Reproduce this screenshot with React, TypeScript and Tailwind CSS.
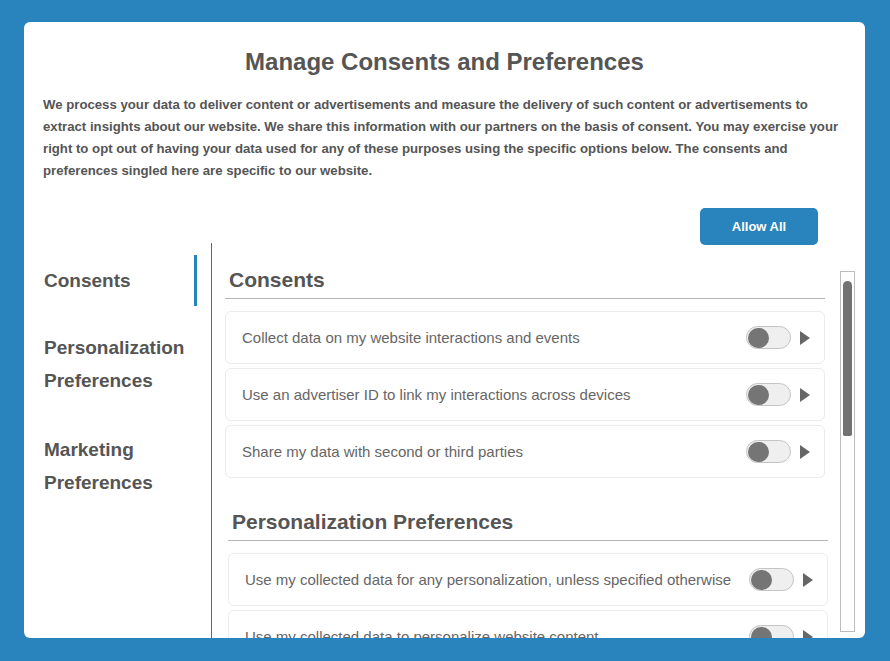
const consents = [
  'Collect data on my website interactions and events',
  'Use an advertiser ID to link my interactions across devices',
  'Share my data with second or third parties',
];

const personalization = [
  'Use my collected data for any personalization, unless specified otherwise',
  'Use my collected data to personalize website content',
];

function Toggle() {
  return (
    <div className="flex h-[23px] w-[45px] items-center rounded-full border border-[#c4c4c4] bg-[#efefef] pl-[1px]">
      <div className="h-[20px] w-[21px] rounded-full bg-[#757575]" />
    </div>
  );
}

function Row({ label }: { label: string }) {
  return (
    <div className="flex h-[53px] items-center justify-between rounded-[6px] border border-[#ebebeb] pl-[16px] pr-[14px]">
      <span className="pt-[2px] text-[15px] text-[#666]">{label}</span>
      <div className="flex items-center gap-[9px]">
        <Toggle />
        <svg width="10" height="14" viewBox="0 0 10 14" className="text-[#666]">
          <path d="M0 0 L10 7 L0 14 Z" fill="currentColor" />
        </svg>
      </div>
    </div>
  );
}

function Section({ title, items }: { title: string; items: string[] }) {
  return (
    <div className="w-[600px]">
      <h2 className="border-b border-[#b5b5b5] pb-[5px] pl-[4px] text-[21px] font-bold leading-[26px] text-[#555]">{title}</h2>
      <div className="mt-[12px] flex flex-col gap-[4px]">
        {items.map((item) => (
          <Row key={item} label={item} />
        ))}
      </div>
    </div>
  );
}

export default function App() {
  return (
    <div className="h-[661px] overflow-hidden bg-[#2983bc] pl-[24px] pr-[25px] pt-[22px] font-['Liberation_Sans',Arial,sans-serif]">
      <div className="flex h-[616px] flex-col overflow-hidden rounded-[6px] bg-white">
        <h1 className="pt-[26px] text-center text-[24px] font-bold leading-[28px] text-[#555]">
          Manage Consents and Preferences
        </h1>
        <p className="mt-[18px] w-[822px] pl-[19px] text-[13.2px] font-bold leading-[22px] text-[#555]">
          We process your data to deliver content or advertisements and measure the delivery of such content or advertisements to extract insights about our website. We share this information with our partners on the basis of consent. You may exercise your right to opt out of having your data used for any of these purposes using the specific options below. The consents and preferences singled here are specific to our website.
        </p>
        <div className="mt-[26px] flex justify-end pr-[47px]">
          <button className="h-[37px] w-[118px] rounded-[5px] bg-[#2983bc] pt-[1px] text-[13px] font-bold text-white">
            Allow All
          </button>
        </div>

        <div className="-mt-[2px] flex min-h-0 flex-1">
          <nav className="w-[187px] pl-[20px] pt-[12px] text-[19px] font-bold leading-[33px] text-[#555]">
            <div className="w-[153px] border-r-[3px] border-[#2983bc] py-[9px]">Consents</div>
            <div className="mt-[16px] w-[153px] py-[9px]">
              Personalization
              <br />
              Preferences
            </div>
            <div className="mt-[18px] w-[153px] py-[9px]">
              Marketing
              <br />
              Preferences
            </div>
          </nav>

          <div className="flex min-h-0 flex-1 overflow-hidden border-l border-[#666]">
            <div className="w-[628px] shrink-0 pl-[13px] pr-[15px] pt-[24px]">
              <Section title="Consents" items={consents} />
              <div className="mt-[31px] pl-[3px]">
                <Section title="Personalization Preferences" items={personalization} />
              </div>
            </div>
            <div className="mt-[28px] h-[361px] w-[15px] shrink-0 border border-[#bcbcbc] px-[2px] pt-[9px]">
              <div className="h-[155px] rounded-t-[5px] rounded-b-[2px] bg-[#737373]" />
            </div>
          </div>
        </div>
      </div>
    </div>
  );
}
